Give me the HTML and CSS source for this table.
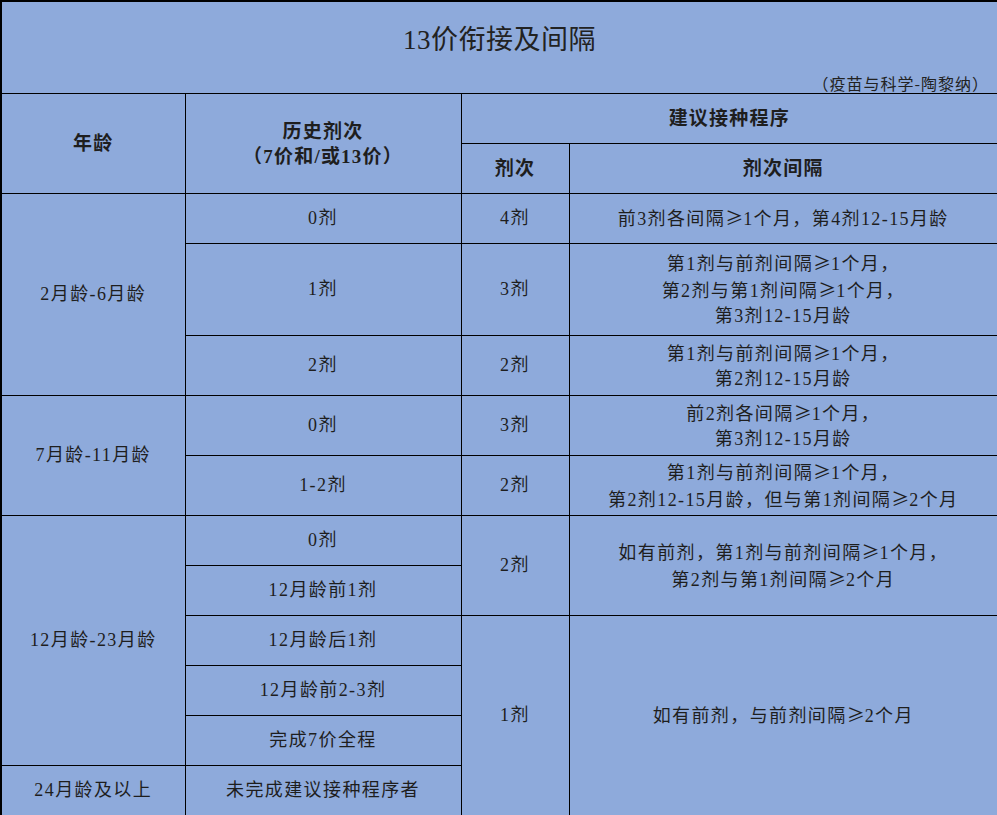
FILE: index.html
```html
<!DOCTYPE html>
<html lang="zh-CN">
<head>
<meta charset="utf-8">
<title>13价衔接及间隔</title>
<link rel="stylesheet" href="styles.css">
</head>
<body>
<table class="sheet">
  <colgroup>
    <col class="c-age">
    <col class="c-hist">
    <col class="c-dose">
    <col class="c-int">
  </colgroup>
  <tr class="r-title">
    <td colspan="4" class="title-cell">
      <div class="title-main">13价衔接及间隔</div>
      <div class="title-note">（疫苗与科学-陶黎纳）</div>
    </td>
  </tr>
  <tr class="r50">
    <th rowspan="2">年龄</th>
    <th rowspan="2">历史剂次<br>（7价和/或13价）</th>
    <th colspan="2">建议接种程序</th>
  </tr>
  <tr class="r50">
    <th>剂次</th>
    <th>剂次间隔</th>
  </tr>
  <tr class="r50">
    <td rowspan="3">2月龄-6月龄</td>
    <td>0剂</td>
    <td>4剂</td>
    <td>前3剂各间隔<span class="sym">≥</span>1个月，第4剂12-15月龄</td>
  </tr>
  <tr class="r92">
    <td>1剂</td>
    <td>3剂</td>
    <td>第1剂与前剂间隔<span class="sym">≥</span>1个月，<br>第2剂与第1剂间隔<span class="sym">≥</span>1个月，<br>第3剂12-15月龄</td>
  </tr>
  <tr class="r60">
    <td>2剂</td>
    <td>2剂</td>
    <td>第1剂与前剂间隔<span class="sym">≥</span>1个月，<br>第2剂12-15月龄</td>
  </tr>
  <tr class="r60">
    <td rowspan="2">7月龄-11月龄</td>
    <td>0剂</td>
    <td>3剂</td>
    <td>前2剂各间隔<span class="sym">≥</span>1个月，<br>第3剂12-15月龄</td>
  </tr>
  <tr class="r60">
    <td>1-2剂</td>
    <td>2剂</td>
    <td>第1剂与前剂间隔<span class="sym">≥</span>1个月，<br>第2剂12-15月龄，但与第1剂间隔<span class="sym">≥</span>2个月</td>
  </tr>
  <tr class="r50">
    <td rowspan="5">12月龄-23月龄</td>
    <td>0剂</td>
    <td rowspan="2">2剂</td>
    <td rowspan="2">如有前剂，第1剂与前剂间隔<span class="sym">≥</span>1个月，<br>第2剂与第1剂间隔<span class="sym">≥</span>2个月</td>
  </tr>
  <tr class="r50">
    <td>12月龄前1剂</td>
  </tr>
  <tr class="r50">
    <td>12月龄后1剂</td>
    <td rowspan="5">1剂</td>
    <td rowspan="5">如有前剂，与前剂间隔<span class="sym">≥</span>2个月</td>
  </tr>
  <tr class="r50">
    <td>12月龄前2-3剂</td>
  </tr>
  <tr class="r50">
    <td>完成7价全程</td>
  </tr>
  <tr class="r50">
    <td>24月龄及以上</td>
    <td>未完成建议接种程序者</td>
  </tr>
</table>
</body>
</html>
```

FILE: styles.css
```css
html, body {
  margin: 0;
  padding: 0;
  background: #8eaadb;
}

.sheet {
  width: 997px;
  border-collapse: collapse;
  table-layout: fixed;
  background: #8eaadb;
  border: 2px solid #000;
  font-family: "Liberation Serif", "Noto Sans CJK SC", serif;
  color: #1e1e1e;
}

.c-age { width: 184px; }
.c-hist { width: 276px; }
.c-dose { width: 108px; }
.c-int { width: 429px; }

.sheet td,
.sheet th {
  border: 1px solid #000;
  padding: 0;
  text-align: center;
  vertical-align: middle;
  font-size: 18px;
  line-height: 25px;
  letter-spacing: 1.4px;
  font-weight: normal;
}

.sheet th {
  font-size: 19px;
  font-weight: bold;
  letter-spacing: 1.2px;
}

.sym {
  font-family: "Noto Sans CJK SC", sans-serif;
  letter-spacing: 0;
}

.r-title { height: 92px; }
.r50 { height: 50px; }
.r60 { height: 60px; }
.r92 { height: 92px; }

.sheet .title-cell {
  vertical-align: top;
}

.title-main {
  padding-top: 20px;
  font-size: 27px;
  line-height: 36px;
  letter-spacing: 0.5px;
  color: #222;
}

.title-note {
  margin-top: 15px;
  padding-right: 8px;
  text-align: right;
  font-family: "Noto Sans CJK SC", sans-serif;
  font-size: 16px;
  line-height: 20px;
  letter-spacing: 1px;
  color: #222;
}
```
